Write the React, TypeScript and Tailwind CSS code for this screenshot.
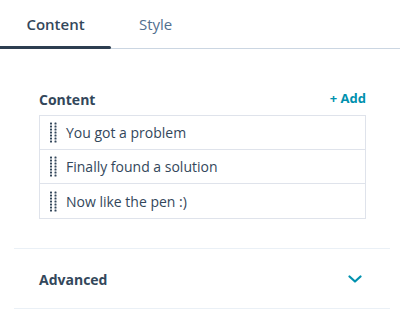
import React from "react";

const font = { fontFamily: '"Open Sans", "Liberation Sans", sans-serif' };

function Handle() {
  const dots = [];
  for (let i = 0; i < 7; i++) {
    dots.push(<rect key={`a${i}`} x={0} y={0.5 + i * 3} width={2} height={2} rx={0.6} fill="#33475b" />);
    dots.push(<rect key={`b${i}`} x={4.5} y={0.5 + i * 3} width={2} height={2} rx={0.6} fill="#33475b" />);
  }
  return (
    <svg width="7" height="21" viewBox="0 0 7 21" className="shrink-0">
      {dots}
    </svg>
  );
}

export default function App() {
  const items = ["You got a problem", "Finally found a solution", "Now like the pen :)"];
  return (
    <div className="w-[400px] h-[336px] bg-white text-[#33475b] overflow-hidden" style={font}>
      <div className="flex h-[49px] border-b border-[#cbd6e2]">
        <div className="relative flex items-center justify-center w-[111px] pt-[1px] text-[15px] font-semibold text-[#33475b]">
          Content
          <span className="absolute left-0 right-0 bottom-[-1px] h-[3px] bg-[#2d3e50] rounded-r-[2px]" />
        </div>
        <div className="flex items-center pl-[28px] pt-[1px] text-[15px] text-[#516f90]">Style</div>
      </div>

      <div className="pl-[39px] pr-[34px] pt-[40px]">
        <div className="flex items-center justify-between h-[20px] mb-[6px]">
          <span className="text-[14px] font-bold">Content</span>
          <span className="text-[13px] font-bold text-[#0091ae]">+ Add</span>
        </div>
        <div className="border border-[#dfe3eb]">
          {items.map((t, i) => (
            <div
              key={t}
              className={`flex items-center h-[34px] pl-[10px] gap-[9px] text-[14px] ${i < items.length - 1 ? "border-b border-[#dfe3eb]" : ""}`}
            >
              <Handle />
              <span>{t}</span>
            </div>
          ))}
        </div>
      </div>

      <div className="ml-[14px] mr-[10px] mt-[29px] border-t border-b border-[#eaf0f6] h-[61px] flex items-center justify-between pl-[25px] pr-[28px]">
        <span className="text-[14px] font-bold pt-[1px]">Advanced</span>
        <svg width="14" height="8" viewBox="0 0 14 8" fill="none">
          <path d="M1.5 1.5 L7 6.5 L12.5 1.5" stroke="#0091ae" strokeWidth="2.2" strokeLinecap="round" strokeLinejoin="round" />
        </svg>
      </div>
    </div>
  );
}
